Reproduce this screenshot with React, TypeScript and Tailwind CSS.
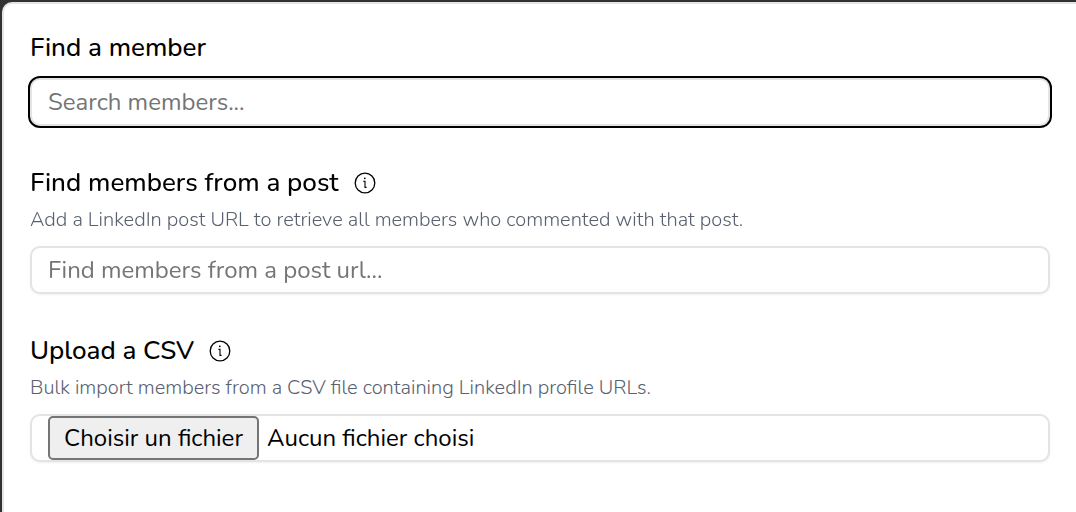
import { useRef, useState } from "react";
import type { ReactNode } from "react";

function InfoIcon() {
  return (
    <svg viewBox="0 0 24 24" className="size-6 shrink-0" fill="none" stroke="currentColor" aria-hidden="true">
      <circle cx="12" cy="12" r="9.8" strokeWidth="1.3" />
      <circle cx="11.8" cy="7.3" r="0.9" fill="currentColor" stroke="none" />
      <path d="M10.4 10.4h1.6v6h1.6" strokeWidth="1.1" />
    </svg>
  );
}

type FieldProps = {
  id: string;
  label: string;
  description?: string;
  info?: boolean;
  children: ReactNode;
};

function Field({ id, label, description, info, children }: FieldProps) {
  return (
    <div className="flex flex-col">
      <div className="flex items-center gap-3.5">
        <label htmlFor={id} className="text-[26px] leading-9 font-medium">
          {label}
        </label>
        {info && <InfoIcon />}
      </div>
      {description && (
        <p className="mt-1 text-xl leading-[29px] font-light text-[#596170]">{description}</p>
      )}
      <div className="mt-3">{children}</div>
    </div>
  );
}

const inputClass =
  "block h-12 w-full rounded-[10px] border-2 border-[#e4e4e4] bg-white px-4 text-2xl shadow-sm shadow-black/5 placeholder:text-[#757575] focus:shadow-none focus:outline-2 focus:outline-solid focus:outline-black";

export default function App() {
  const fileInput = useRef<HTMLInputElement>(null);
  const [fileName, setFileName] = useState("");

  return (
    <div className="flex min-h-screen bg-[#333131] pt-0.5 pl-0.5 font-['Nunito','Open_Sans',sans-serif] text-black">
      <main className="flex grow flex-col gap-[39px] rounded-tl-[10px] border-t-2 border-l-2 border-[#e5e5e5] bg-white p-[26px]">
        <Field id="member" label="Find a member">
          <input id="member" type="text" autoFocus placeholder="Search members..." className={inputClass + " caret-transparent"} />
        </Field>
        <Field
          id="post"
          label="Find members from a post"
          info
          description="Add a LinkedIn post URL to retrieve all members who commented with that post."
        >
          <input id="post" type="text" placeholder="Find members from a post url..." className={inputClass} />
        </Field>
        <Field
          id="csv"
          label="Upload a CSV"
          info
          description="Bulk import members from a CSV file containing LinkedIn profile URLs."
        >
          <div className="flex h-12 items-stretch gap-2 rounded-[10px] border-2 border-[#e4e4e4] bg-white px-4 text-2xl shadow-sm shadow-black/5">
            <input
              ref={fileInput}
              id="csv"
              type="file"
              accept=".csv"
              className="hidden"
              onChange={(event) => setFileName(event.target.files?.[0]?.name ?? "")}
            />
            <button
              type="button"
              onClick={() => fileInput.current?.click()}
              className="rounded-[5px] border-2 border-[#757575] bg-[#efefef] px-3.5"
            >
              Choisir un fichier
            </button>
            <span className="self-center">{fileName || "Aucun fichier choisi"}</span>
          </div>
        </Field>
      </main>
    </div>
  );
}
